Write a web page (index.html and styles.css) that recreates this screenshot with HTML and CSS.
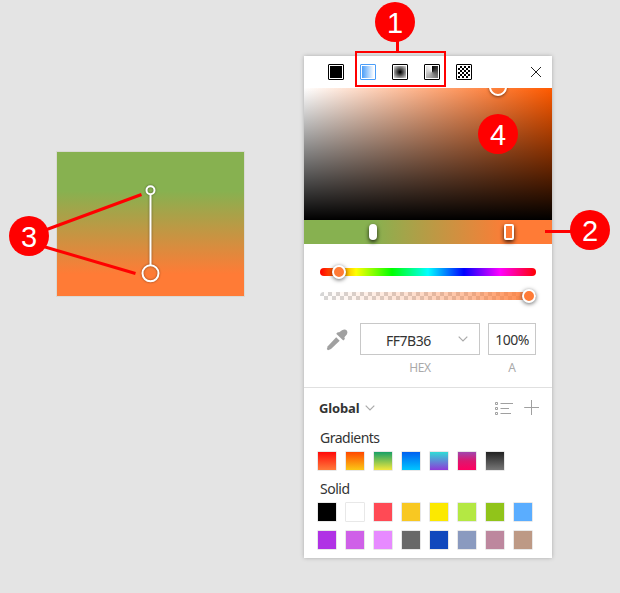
FILE: index.html
```html
<!DOCTYPE html>
<html lang="en">
<head>
<meta charset="utf-8">
<title>Color picker</title>
<link rel="stylesheet" href="styles.css">
</head>
<body>
<main class="stage">
  <div class="shape"></div>
  <section class="picker">
    <header class="modes">
      <div class="mode-list">
        <span class="mode"><i class="fill solid"></i></span>
        <span class="mode active"><i class="fill linear"></i></span>
        <span class="mode"><i class="fill radial"></i></span>
        <span class="mode"><i class="fill angular"></i></span>
        <span class="mode"><i class="fill pattern"></i></span>
      </div>
      <svg class="close" width="12" height="12" viewBox="0 0 12 12"><path d="M1 1L11 11M11 1L1 11"/></svg>
    </header>
    <div class="field"><span class="ring"></span></div>
    <div class="stops"><span class="stop start"></span><span class="stop end"></span></div>
    <div class="sliders">
      <div class="slider hue"><span class="knob"></span></div>
      <div class="slider alpha"><span class="knob"></span></div>
    </div>
    <div class="inputs">
      <svg class="dropper" width="22" height="22" viewBox="0 0 22 22"><path d="M13.2 3.2L16 1.2Q19 -.2 20.8 1.4Q22 3.2 20.8 5.5L18.4 8.3L18.9 10L17.3 11.5L10.2 4.8L11.8 3.2Z"/><path d="M10.2 8.2L13.7 11.7L5 20L2 21.2L.8 20L1.8 17.2Z" /></svg>
      <label class="group hex"><span class="box"><span>FF7B36</span><svg width="10" height="6" viewBox="0 0 10 6"><path d="M.7 .7L5 5L9.3 .7"/></svg></span><span class="caption">HEX</span></label>
      <label class="group opacity"><span class="box">100%</span><span class="caption">A</span></label>
    </div>
    <div class="library">
      <div class="library-head">
        <span class="scope">Global</span>
        <svg class="chevron" width="10" height="6" viewBox="0 0 10 6"><path d="M.7 .7L5 5L9.3 .7"/></svg>
        <svg class="actions" width="46" height="16" viewBox="0 0 46 16"><path d="M.5 2.5h2v2h-2zM.5 7.5h2v2h-2zM.5 12.5h2v2h-2zM5.5 3.5H18M5.5 8.5H14M5.5 13.5H16M29.2 7.5H44M36.5 0V15"/></svg>
      </div>
      <h2 class="title">Gradients</h2>
      <div class="swatches gradients">
        <i class="g1"></i><i class="g2"></i><i class="g3"></i><i class="g4"></i><i class="g5"></i><i class="g6"></i><i class="g7"></i>
      </div>
      <h2 class="title">Solid</h2>
      <div class="swatches">
        <i class="s1"></i><i class="s2"></i><i class="s3"></i><i class="s4"></i><i class="s5"></i><i class="s6"></i><i class="s7"></i><i class="s8"></i>
        <i class="s9"></i><i class="s10"></i><i class="s11"></i><i class="s12"></i><i class="s13"></i><i class="s14"></i><i class="s15"></i><i class="s16"></i>
      </div>
    </div>
  </section>
  <svg class="lines" width="620" height="593" viewBox="0 0 620 593">
    <g class="handles">
      <path d="M150.5 195V265" stroke-width="2"/>
      <circle cx="150.5" cy="190.3" r="4" stroke-width="2"/>
      <circle cx="150.5" cy="273.3" r="8" stroke-width="2"/>
    </g>
    <path class="callout" d="M397.5 38V52M545 231.5H575M40 232L141.5 194.5M40 245.5L135.5 273.5"/>
    <rect class="frame" x="356" y="52" width="89" height="34"/>
  </svg>
  <span class="badge b1">1</span>
  <span class="badge b2">2</span>
  <span class="badge b3">3</span>
  <span class="badge b4">4</span>
</main>
</body>
</html>
```
FILE: styles.css
```css
* { box-sizing: border-box; }
body { margin: 0; background: #e4e4e4; font-family: "Noto Sans", "Open Sans", sans-serif; color: #333; }
.stage { position: relative; width: 620px; height: 593px; display: flex; align-items: flex-start; overflow: hidden; }
svg { display: block; flex: none; }

.shape {
  width: 189px; height: 146px; margin: 151px 59px 0 56px;
  border: 1px solid rgba(228, 228, 228, .6);
  background: linear-gradient(#87b150 39px, #ff7b36 122px) padding-box, #c8c8b8;
}

.picker { width: 248px; height: 502px; margin-top: 56px; background: #fff; box-shadow: 0 0 4px rgba(0, 0, 0, .25); }

.modes { height: 32px; padding: 0 10px 0 24px; display: flex; align-items: center; justify-content: space-between; }
.mode-list { display: flex; gap: 16px; }
.mode { width: 16px; height: 16px; padding: 1px; border: 1px solid #000; border-radius: 1px; }
.mode.active { border-color: #4a9df8; }
.fill { display: block; width: 12px; height: 12px; }
.solid { background: #000; }
.linear { background: linear-gradient(90deg, #4a9df8, #fff); }
.radial { background: radial-gradient(circle, #000 5%, #777 55%, #ddd 100%); }
.angular { background: conic-gradient(#000, #555 25%, #999 50%, #ccc 75%, #fff); }
.pattern { background: conic-gradient(#000 25%, #fff 0 50%, #000 0 75%, #fff 0) 0 0 / 4px 4px; }
.close { fill: none; stroke: #222; stroke-width: 1; }

.field {
  position: relative; height: 132px; overflow: hidden;
  background: linear-gradient(transparent, #000), linear-gradient(90deg, #fff, #ff5a00);
}
.ring {
  position: absolute; left: 185px; top: -10px; width: 18px; height: 18px;
  border: 2px solid #fff; border-radius: 50%; box-shadow: 0 1px 3px rgba(0, 0, 0, .5);
}

.stops { position: relative; height: 24px; background: linear-gradient(90deg, #87b150 69px, #ff7b36 205px); }
.stop { position: absolute; top: 4px; height: 16px; box-shadow: 0 2px 4px rgba(0, 0, 0, .8); }
.stop.start { left: 65px; width: 8px; background: #fff; border-radius: 4px; }
.stop.end { left: 200px; width: 10px; border: 2px solid #fff; border-radius: 2px; background: #ff7b36; }

.sliders { height: 79px; padding: 24px 16px 0; display: grid; gap: 16px; align-content: start; }
.slider { position: relative; height: 8px; border-radius: 4px; }
.hue { background: linear-gradient(90deg, #f00, #ff0 16.67%, #0f0 33.33%, #0ff 50%, #00f 66.67%, #f0f 83.33%, #f00); }
.alpha {
  background:
    linear-gradient(90deg, rgba(255, 123, 54, 0), rgba(255, 123, 54, .22) 40%, rgba(255, 123, 54, .5) 70%, rgba(255, 123, 54, .95)),
    conic-gradient(#fff 25%, #d6d6d6 0 50%, #fff 0 75%, #d6d6d6 0) 0 0 / 8px 8px;
}
.knob {
  position: absolute; top: -3px; width: 14px; height: 14px;
  border: 2px solid #fff; border-radius: 50%; background: #ff7b36; box-shadow: 0 1px 4px rgba(0, 0, 0, .6);
}
.hue .knob { left: 12px; }
.alpha .knob { left: 202px; }

.inputs { height: 64px; padding: 0 16px 0 22px; display: flex; }
.dropper { margin-top: 6px; fill: #a0a0a0; }
.group { display: flex; flex-direction: column; align-items: center; }
.hex { width: 120px; margin: 0 8px 0 12px; }
.opacity { width: 48px; }
.box {
  width: 100%; height: 32px; border: 1px solid #c8c8c8; display: flex; align-items: center; justify-content: center;
  font-size: 14px; letter-spacing: -.5px; color: #333;
}
.hex .box { justify-content: space-between; padding: 2px 11px 0 25px; }
.box svg, .chevron { fill: none; stroke: #aaa; stroke-width: 1.2; }
.box svg { margin-top: -3px; }
.caption { margin-top: 5px; font-size: 12px; line-height: 16px; letter-spacing: -.4px; color: #aaa; }

.library { border-top: 1px solid #e0e0e0; padding: 0 12px 0 13px; }
.library-head { height: 40px; display: flex; align-items: center; padding-left: 2px; }
.scope { font-size: 13px; font-weight: 700; letter-spacing: -.15px; }
.chevron { margin: -1px 0 0 6px; }
.actions { margin-left: auto; margin-right: -1px; fill: none; stroke: #a0a0a0; stroke-width: 1; }
.title { margin: 0 0 0 3px; font-size: 14px; font-weight: 400; line-height: 20px; letter-spacing: -.5px; }
.swatches { display: grid; grid-template-columns: repeat(8, 20px); gap: 8px; padding-top: 3px; }
.gradients { height: 31px; }
.swatches i { width: 20px; height: 20px; border: 1px solid #e8e8e8; border-radius: 1px; background-clip: padding-box; background-origin: padding-box; }
.g1 { background: linear-gradient(#ff0a0a, #ff7b3a); }
.g2 { background: linear-gradient(#ff4800, #fbc815); }
.g3 { background: linear-gradient(#18a066, #f3e83b); }
.g4 { background: linear-gradient(#0060f0, #00c6ff); }
.g5 { background: linear-gradient(#30dcd6, #8e3ad8); }
.g6 { background: linear-gradient(#a047ae, #dc176f 50%, #ff0060); }
.g7 { background: linear-gradient(#222, #777); }
.s1 { background: #000; }
.s2 { background: #fff; }
.s3 { background: #ff4a55; }
.s4 { background: #f8c822; }
.s5 { background: #fce900; }
.s6 { background: #b4e843; }
.s7 { background: #91c41a; }
.s8 { background: #5aadff; }
.s9 { background: #b032e5; }
.s10 { background: #cf60e8; }
.s11 { background: #e78aff; }
.s12 { background: #686868; }
.s13 { background: #1148bd; }
.s14 { background: #8a9abf; }
.s15 { background: #bd879e; }
.s16 { background: #bd9985; }

.lines { position: absolute; inset: 0; }
.handles { fill: none; stroke: #fff; filter: drop-shadow(0 0 1px rgba(0, 0, 0, .45)); }
.callout { stroke: #f00; stroke-width: 3; fill: none; }
.frame { stroke: #f00; stroke-width: 2; fill: none; }
.badge {
  position: absolute; width: 40px; height: 40px; border-radius: 50%; background: #f00; color: #fff;
  font: 29px/42px "Liberation Sans", sans-serif; text-align: center;
}
.b1 { left: 375px; top: 2px; }
.b2 { left: 570px; top: 210px; }
.b3 { left: 9px; top: 216px; }
.b4 { left: 478px; top: 114px; }
```
